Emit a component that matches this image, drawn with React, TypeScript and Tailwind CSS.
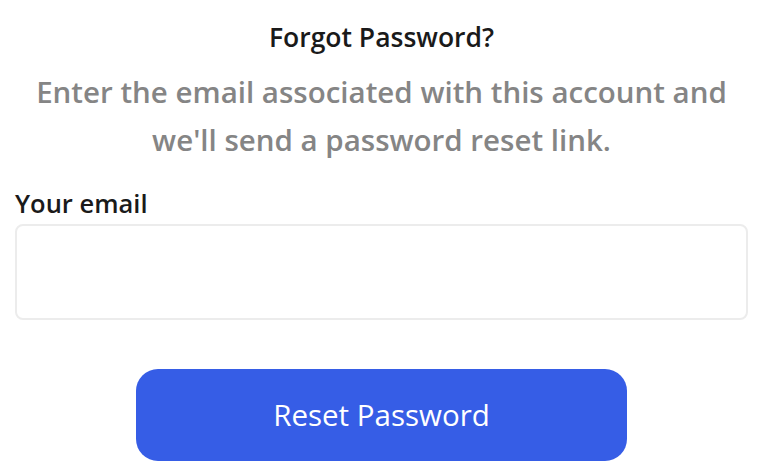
export default function App() {
  return (
    <div className="w-[760px] h-[476px] bg-white pl-[15px] pr-[12px] pt-[20px] font-['Open_Sans',sans-serif]">
      <h1 className="text-center text-[26.5px] leading-[34px] font-semibold text-[#1a1a1a]">Forgot Password?</h1>
      <p className="mt-[14px] text-center text-[29.5px] leading-[48px] font-semibold text-[#858585]">
        Enter the email associated with this account and
        <br />
        we'll send a password reset link.
      </p>
      <label className="block mt-[22px] text-[25.5px] leading-[34px] font-semibold text-[#1a1a1a]">Your email</label>
      <input
        type="email"
        className="mt-[4px] block w-full h-[96px] rounded-[8px] border-2 border-[#ececec] bg-white px-4 outline-none"
      />
      <div className="flex justify-center mt-[49px]">
        <button className="w-[491px] h-[92px] rounded-[22px] bg-[#365de6] text-white text-[29.5px]">
          Reset Password
        </button>
      </div>
    </div>
  )
}
